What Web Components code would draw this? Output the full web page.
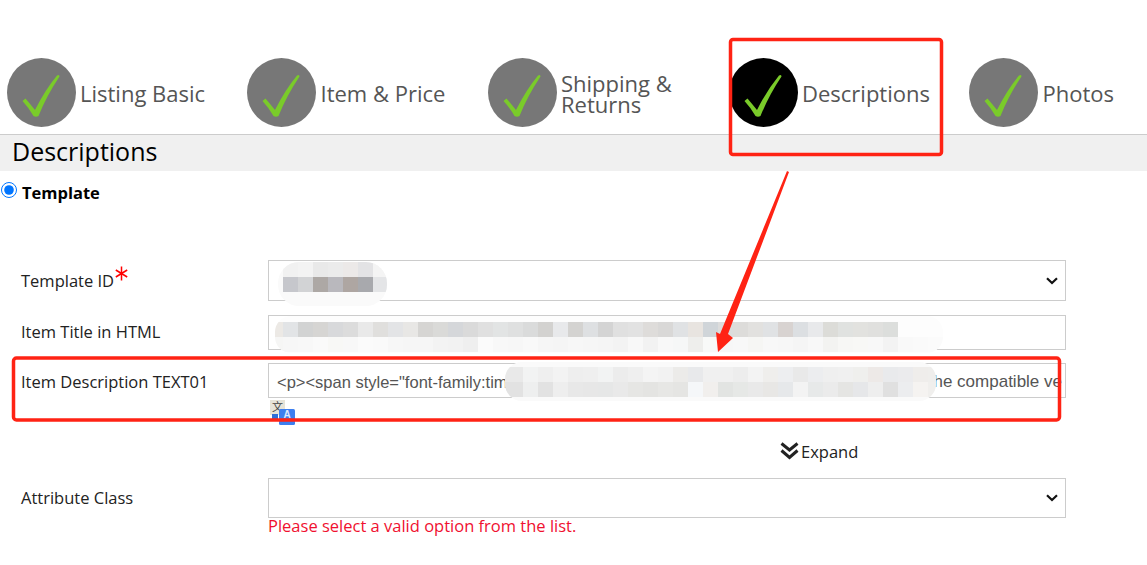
<!DOCTYPE html>
<html lang="en">
<head>
<meta charset="utf-8">
<title>Descriptions</title>
<style>
  html, body { margin: 0; padding: 0; background: #fff; overflow: hidden; }
  body { position: relative; width: 1147px; height: 565px; font-family: "Open Sans", sans-serif; }
  .up { display: block; padding-bottom: 2px; }
  .up2 { display: block; padding-bottom: 4px; }
  .down { display: block; padding-top: 2px; }
</style>
</head>
<body>
<listing-page>
  <wizard-steps>
    <step-item>Listing Basic</step-item>
    <step-item style="--gap:4.5px">Item &amp; Price</step-item>
    <step-item style="--label-top:3px">Shipping &amp;<br>Returns</step-item>
    <step-item active>Descriptions</step-item>
    <step-item style="--gap:4.5px">Photos</step-item>
  </wizard-steps>
  <section-title>Descriptions</section-title>
  <radio-option>Template</radio-option>
  <form-row style="margin-top:61px"><span class="up2">Template ID<req-star></req-star></span><select-box slot="control" height="41"></select-box></form-row>
  <form-row style="margin-top:14px"><span class="up">Item Title in HTML</span><text-box slot="control"></text-box></form-row>
  <form-row style="margin-top:13px"><span class="down">Item Description TEXT01</span><text-box slot="control" start='&lt;p&gt;&lt;span style="font-family:tim' end="he compatible ve"></text-box></form-row>
  <translate-badge></translate-badge>
  <expand-link>Expand</expand-link>
  <form-row style="margin-top:18px"><span class="up">Attribute Class</span><select-box slot="control" height="40"></select-box></form-row>
  <error-note>Please select a valid option from the list.</error-note>
</listing-page>
<review-marks></review-marks>

<script>
// small helper so each element only has to say what its shadow holds
function shadow(el, html) {
  el.attachShadow({ mode: 'open' }).innerHTML = html;
}

class ListingPage extends HTMLElement {
  constructor() {
    super();
    shadow(this, `<style>:host { display: block; width: 1147px; color: #222; font: 16.5px "Open Sans", sans-serif; }</style><slot></slot>`);
  }
}

class WizardSteps extends HTMLElement {
  constructor() {
    super();
    shadow(this, `<style>
      :host { display: block; padding: 58px 0 7px 7px; overflow: hidden; }
      .row { display: grid; grid-template-columns: 240px 241px 241px 240px 178px; }
    </style><div class="row"><slot></slot></div>`);
  }
}

class StepItem extends HTMLElement {
  constructor() {
    super();
    shadow(this, `<style>
      :host { display: flex; align-items: center; gap: var(--gap, 4px); height: 69px; }
      svg { flex: none; display: block; }
      .label { font-size: 22px; line-height: 21px; color: #555; padding-top: var(--label-top, 1px); }
    </style>
    <svg width="69" height="69" viewBox="0 0 69 69">
      <circle cx="34.5" cy="34.5" r="34.5" fill="${this.hasAttribute('active') ? '#000' : '#777'}"/>
      <path d="M15.5 43 L18.5 40.5 Q24 47 28 52 Q38 32 50 17.5 Q52.5 16 52.5 18.5 Q40 37 31.5 58 Q29 59.5 26.5 58 Q22 50 15.5 43 Z" fill="#7acb2a"/>
    </svg>
    <div class="label"><slot></slot></div>`);
  }
}

class SectionTitle extends HTMLElement {
  constructor() {
    super();
    shadow(this, `<style>
      :host { display: block; height: 36px; line-height: 33px; padding-left: 12px; font-size: 25px; color: #000;
        background: #f0f0f0; border-top: 1px solid #ccc; }
    </style><slot></slot>`);
  }
}

class RadioOption extends HTMLElement {
  constructor() {
    super();
    shadow(this, `<style>
      :host { display: flex; align-items: flex-start; gap: 5px; height: 17px; margin: 11px 0 0 1px; font-weight: 700; color: #000; }
      input { flex: none; width: 16px; height: 16px; margin: 0; accent-color: #0075ff; }
      span { line-height: 22px; }
    </style><input type="radio" checked><span><slot></slot></span>`);
  }
}

class FormRow extends HTMLElement {
  constructor() {
    super();
    shadow(this, `<style>
      :host { display: grid; grid-template-columns: 247px 798px; align-items: center; padding-left: 21px; color: #222; }
    </style><div><slot></slot></div><slot name="control"></slot>`);
  }
}

class ReqStar extends HTMLElement {
  constructor() {
    super();
    shadow(this, `<style>
      :host { display: inline-block; width: 13px; height: 15px; vertical-align: 6px; margin-left: 1px; }
      svg { display: block; }
    </style>
    <svg width="13" height="15" viewBox="0 0 13 15" fill="none" stroke="#f00" stroke-width="1.5">
      <path d="M6.5 0.5V14.5M0.8 4L12.2 11M12.2 4L0.8 11"/>
    </svg>`);
  }
}

class SelectBox extends HTMLElement {
  constructor() {
    super();
    const h = this.getAttribute('height') || 40;
    shadow(this, `<style>
      :host { display: flex; align-items: center; justify-content: flex-end; box-sizing: border-box; width: 798px;
        height: ${h}px; padding-right: 7px; border: 1px solid #ccc; background: #fff; }
      svg { display: block; }
    </style>
    <svg width="12" height="8" viewBox="0 0 12 8" fill="none" stroke="#111" stroke-width="2.2"><path d="M1 1.2L6 6L11 1.2"/></svg>`);
  }
}

class TextBox extends HTMLElement {
  constructor() {
    super();
    const start = this.getAttribute('start') || '';
    const end = this.getAttribute('end') || '';
    shadow(this, `<style>
      :host { display: flex; justify-content: space-between; align-items: center; box-sizing: border-box; width: 798px; height: 35px;
        padding: 3px 3px 0 8px; border: 1px solid #ccc; background: #fff; overflow: hidden; white-space: nowrap;
        font: 17px "Liberation Sans", Arial, sans-serif; color: #555; }
      .a { font-size: 16.5px; }
    </style><span class="a"></span><span class="b"></span>`);
    this.shadowRoot.querySelector('.a').textContent = start;
    this.shadowRoot.querySelector('.b').textContent = end;
  }
}

class TranslateBadge extends HTMLElement {
  constructor() {
    super();
    shadow(this, `<style>
      :host { display: block; height: 25px; margin: 2px 0 0 270px; }
      svg { display: block; overflow: visible; }
      .zh { font: 11px "Noto Sans CJK SC", sans-serif; fill: #444; }
      .en { font: 700 10px "Liberation Sans", sans-serif; fill: #dfe9ff; }
    </style>
    <svg width="25" height="25" viewBox="0 0 25 25">
      <rect x="0" y="0" width="15" height="15" fill="#e6e3d8"/>
      <text class="zh" x="2" y="11">文</text>
      <rect x="2" y="14" width="6" height="6" fill="#2f6fd8"/>
      <rect x="9" y="9" width="16" height="16" rx="1.5" fill="#3d7ff0"/>
      <text class="en" x="13.5" y="18">A</text>
    </svg>`);
  }
}

class ExpandLink extends HTMLElement {
  constructor() {
    super();
    shadow(this, `<style>
      :host { display: flex; align-items: center; gap: 2px; height: 18px; margin: 17px 0 0 780px; color: #222; }
      svg { display: block; flex: none; }
    </style>
    <svg width="19" height="18" viewBox="0 0 19 18" fill="none" stroke="#222" stroke-width="3">
      <path d="M1.5 1.5L9.5 8L17.5 1.5M1.5 8.5L9.5 15.5L17.5 8.5"/>
    </svg>
    <span><slot></slot></span>`);
  }
}

class ErrorNote extends HTMLElement {
  constructor() {
    super();
    shadow(this, `<style>
      :host { display: block; margin: -2px 0 0 268px; line-height: 19px; color: #f01030; }
    </style><slot></slot>`);
  }
}

// the red marks and the pixelated patches somebody painted over the screenshot
const PATCHES = [
  {
    id: 'p1', x: 278, y: 262, w: 109, h: 44, r: 21, base: '#fafafa', cx: 283, cy: 262,
    rows: [
      ['f1f1f1', 'f3f3f3', 'e9e9e9', 'ebebeb', 'ece9e8', 'e3e3e5', 'f4f4f4'],
      ['c6c7cc', 'd2d3d5', 'ada8a5', 'b9b8bd', 'aea6a2', 'a8a9ad', 'e4e5e7']
    ]
  },
  {
    id: 'p2', x: 275, y: 316, w: 668, h: 37, r: 16, base: '#fdfdfd', cx: 283, cy: 322,
    rows: [
      ['e2e4e6', 'd2d3d3', 'd6d5d3', 'd8d9db', 'dcdcdc', 'e9e9e9', 'e0dfdd', 'e3e4e6', 'e8e7e5', 'd6d5d3', 'dadad8', 'd5d7da', 'dadada', 'e0e0e0', 'e2e4e4', 'dfe0e0', 'dadbdb', 'd3d2d0', 'e8e9eb', 'd4d3d1', 'dee0e2',
       'd4d4d4', 'e0e0e0', 'e2e2e2', 'dedcda', 'd9d8d7', 'e0e2e4', 'e8e4e0', 'd0d5d9', 'dcdcdc', 'dddcda', 'e2e1df', 'e0e2e4', 'd8d3d1', 'dcdfe2', 'e8e9eb', 'dcdcd8', 'e0e2e0', 'e2e2df', 'e0e0de', 'dcdedc'],
      ['f7f7f7', 'f8f8f8', 'fafafa', 'f8f8f6', 'f8f8f8', 'fbfbfb', 'fafafa', 'f7f7f7', 'f6f6f6', 'f6f6f6', 'f3f3f3', 'f2f2f2', 'efefef', 'fbfbfb', 'f8f8f8', 'f7f7f7', 'f9f9f9', 'f6f6f6', 'f5f5f5', 'f7f7f7', 'f6f6f6',
       'f5f5f5', 'f3f3f3', 'f8f8f8', 'f2f2f2', 'f8f8f8', 'f6f7f7', 'eeeeec', 'f8f9f8', 'f7f7f7', 'f8f8f8', 'f6f6f4', 'f8f8f8', 'f7f7f7', 'f5f5f5', 'f8f8f8', 'f3f3f1', 'f7f7f5', 'f8f8f6', 'f8f8f8', 'f3f3f3', 'f9f9f9', 'fafafa', 'fbfbfb']
    ],
    lead: ['ece9e5', 'f6f6f5']
  },
  {
    id: 'p3', x: 505, y: 362, w: 431, h: 39, r: 17, base: '#fafafa', cx: 523, cy: 367,
    rows: [
      ['f2f3f3', 'efefef', 'f3f3f3', 'eeeeee', 'efefef', 'f2f3f3', 'ececec', 'efefef', 'f4f4f4', 'f2f2f2', 'ecebe9', 'e8e9eb', 'f0f0f0',
       'f0f0f0', 'ededed', 'f3f3f3', 'efeeec', 'edeef0', 'e9e9e9', 'ecedef', 'efefef', 'f0f0f0', 'efefed', 'ede9e7', 'e9eaec', 'ebebed', 'efedeb', 'efeeec'],
      ['eeefef', 'e2e2e2', 'eeeeee', 'e8e8e8', 'e7e7e7', 'e6e7e7', 'e9e9e9', 'e6e6e4', 'e4e4e2', 'e7e7e5', 'e5e5e3', 'f5f7f9', 'f1efed',
       'e2e4e2', 'e6e8e6', 'e9e9e9', 'e8e7e5', 'e6e8ea', 'f3f3f3', 'e7e9e9', 'ebebeb', 'e5e5e3', 'e6e7e9', 'eeeeee', 'e0e0e0', 'ecedef', 'f5f3f1', 'f0efed']
    ],
    lead: ['e9e9e9', 'e2e2e2']
  }
];

class ReviewMarks extends HTMLElement {
  constructor() {
    super();
    let defs = '';
    let cells = '';
    for (const p of PATCHES) {
      defs += `<clipPath id="${p.id}"><rect x="${p.x}" y="${p.y}" width="${p.w}" height="${p.h}" rx="${p.r}"/></clipPath>`;
      cells += `<g clip-path="url(#${p.id})"><rect x="${p.x}" y="${p.y}" width="${p.w}" height="${p.h}" fill="${p.base}"/>`;
      p.rows.forEach((row, r) => {
        const y = p.cy + r * 15;
        if (p.lead) cells += `<rect x="${p.x}" y="${y}" width="${p.cx - p.x}" height="15" fill="#${p.lead[r]}"/>`;
        row.forEach((c, i) => {
          cells += `<rect x="${p.cx + i * 15}" y="${y}" width="15" height="15" fill="#${c}"/>`;
        });
      });
      cells += '</g>';
    }
    shadow(this, `<style>
      :host { position: absolute; left: 0; top: 0; width: 1147px; height: 565px; pointer-events: none; }
      svg { display: block; }
    </style>
    <svg width="1147" height="565" viewBox="0 0 1147 565">
      <defs>${defs}</defs>
      ${cells}
      <g fill="none" stroke="#ff2314" stroke-width="3.5">
        <rect x="730.5" y="39.5" width="211" height="115" rx="2.5"/>
        <rect x="13.5" y="358" width="1046" height="62" rx="3"/>
      </g>
      <path d="M787 171 L789 172 L728 334 L733 338 L718 352 L716 332 L720 334 Z" fill="#ff2314"/>
    </svg>`);
  }
}

customElements.define('listing-page', ListingPage);
customElements.define('wizard-steps', WizardSteps);
customElements.define('step-item', StepItem);
customElements.define('section-title', SectionTitle);
customElements.define('radio-option', RadioOption);
customElements.define('form-row', FormRow);
customElements.define('req-star', ReqStar);
customElements.define('select-box', SelectBox);
customElements.define('text-box', TextBox);
customElements.define('translate-badge', TranslateBadge);
customElements.define('expand-link', ExpandLink);
customElements.define('error-note', ErrorNote);
customElements.define('review-marks', ReviewMarks);
</script>
</body>
</html>
